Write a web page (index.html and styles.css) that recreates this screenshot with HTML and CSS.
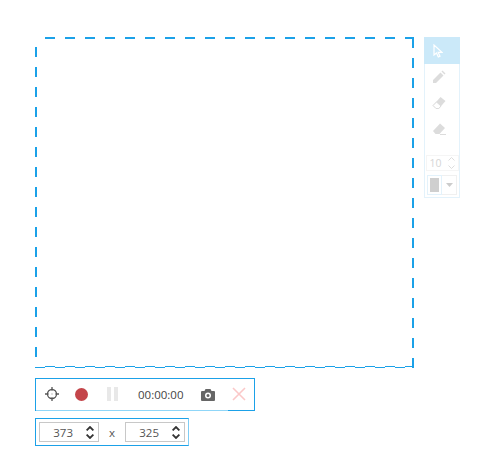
FILE: index.html
```html
<!DOCTYPE html>
<html lang="en">
<head>
<meta charset="utf-8">
<title>Recorder</title>
<link rel="stylesheet" href="styles.css">
</head>
<body>
<div class="stage">
  <div class="top-row">
    <svg class="frame" width="379" height="331" viewBox="0 0 379 331">
      <path class="frame-line" d="M10 1H379"/>
      <path class="frame-line" d="M1 10V330"/>
      <path class="frame-line" d="M378 331V0"/>
      <path class="frame-edge frame-edge-a" d="M379 329.500H0"/>
      <path class="frame-edge" d="M370 330.500H0"/>
    </svg>
    <div class="side">
      <div class="tool tool-active">
        <svg width="10" height="14" viewBox="0 0 10 14"><path d="M1 1v10l2.500-2 1.800 4 1.700-.8-1.800-3.800H9z" fill="#cbe9f9" stroke="#fff" stroke-width="1.200"/></svg>
      </div>
      <div class="tool">
        <svg width="14" height="14" viewBox="0 0 14 14"><path d="M1 10 8.500 2.500l3 3L4 13H1zM9.500 1.500l1-1 3 3-1 1z" fill="#dcdcdc"/></svg>
      </div>
      <div class="tool">
        <svg width="14" height="14" viewBox="0 0 14 14"><path d="M8.500 1 13.500 5 7 12.500H4L1 9.500z" fill="#dcdcdc"/><path d="M4.500 6l4.500 4-2.200 2.500H4L1 9.500z" fill="#fff" stroke="#dcdcdc"/></svg>
      </div>
      <div class="tool">
        <svg width="14" height="14" viewBox="0 0 14 14"><path d="M8 1.500 13 6l-5.500 6H3.500L1 9z" fill="#dcdcdc"/><path d="M8 12.500h6" stroke="#dcdcdc"/></svg>
      </div>
      <div class="side-spin">
        <span>10</span>
        <span class="side-arrows">
          <svg width="7" height="4" viewBox="0 0 7 4"><path d="M.5 3.500 3.500.5l3 3" fill="none" stroke="#ddd"/></svg>
          <svg width="7" height="4" viewBox="0 0 7 4"><path d="M.5.500l3 3 3-3" fill="none" stroke="#ddd"/></svg>
        </span>
      </div>
      <div class="color-row">
        <div class="swatch-box"><div class="swatch"></div></div>
        <div class="drop"><svg width="7" height="4" viewBox="0 0 7 4"><path d="M0 0h7L3.500 4z" fill="#ccc"/></svg></div>
      </div>
    </div>
  </div>
  <div class="controls">
    <svg class="ic-target" width="14" height="14" viewBox="0 0 14 14"><circle cx="7" cy="7" r="4.500" fill="none" stroke="#555" stroke-width="1.300"/><path d="M7 0v3.500M7 10.500V14M0 7h3.500M10.500 7H14" stroke="#555" stroke-width="1.300"/><path d="M6.500 6.500h1v1h-1z" fill="#888"/></svg>
    <span class="rec"></span>
    <span class="pause"><i></i><i></i></span>
    <span class="time">00:00:00</span>
    <svg class="ic-cam" width="14" height="12" viewBox="0 0 14 12"><path fill-rule="evenodd" d="M4.500 0h5l1 2H13a1 1 0 0 1 1 1v8a1 1 0 0 1-1 1H1a1 1 0 0 1-1-1V3a1 1 0 0 1 1-1h2.500zM7 3.500a3 3 0 1 0 0 6 3 3 0 0 0 0-6zM7 5a1.500 1.500 0 1 1 0 3 1.500 1.500 0 0 1 0-3z" fill="#666"/></svg>
    <svg class="ic-close" width="14" height="14" viewBox="0 0 14 14"><path d="M1 1l12 12M13 1 1 13" stroke="#fbc8c8" stroke-width="1.600"/></svg>
  </div>
  <div class="size">
    <div class="spin"><span class="spin-val">373</span><span class="arrows"><svg width="8" height="5" viewBox="0 0 8 5"><path d="M.6 4.400 4 1l3.400 3.400" fill="none" stroke="#333" stroke-width="1.800"/></svg><svg width="8" height="5" viewBox="0 0 8 5"><path d="M.6.600 4 4 7.400.6" fill="none" stroke="#333" stroke-width="1.800"/></svg></span></div>
    <span class="times">x</span>
    <div class="spin"><span class="spin-val">325</span><span class="arrows"><svg width="8" height="5" viewBox="0 0 8 5"><path d="M.6 4.400 4 1l3.400 3.400" fill="none" stroke="#333" stroke-width="1.800"/></svg><svg width="8" height="5" viewBox="0 0 8 5"><path d="M.6.600 4 4 7.400.6" fill="none" stroke="#333" stroke-width="1.800"/></svg></span></div>
  </div>
</div>
</body>
</html>
```
FILE: styles.css
```css
* { box-sizing: border-box; }
html, body { margin: 0; background: #fff; }
body { font-family: "Open Sans", "Liberation Sans", sans-serif; font-size: 11.5px; color: #555; }
.stage { padding: 37px 0 0 35px; display: flex; flex-direction: column; align-items: flex-start; }
.top-row { display: flex; align-items: flex-start; gap: 10px; }
.frame { display: block; }
.frame-line { fill: none; stroke: #1ba1e8; stroke-width: 2; stroke-dasharray: 10 10; }
.frame-edge { fill: none; stroke: #1ba1e8; stroke-width: 1; stroke-dasharray: 10 10; }
.frame-edge-a { stroke-dashoffset: 1; }
.side { width: 36px; height: 161px; border: 1px solid #e3f2fb; display: flex; flex-direction: column; align-items: center; }
.tool { width: 34px; height: 26px; display: flex; align-items: center; padding-left: 7px; flex: none; }
.tool-active { background: #cbe9f9; height: 27px; margin-top: -1px; width: 36px; padding-left: 9px; }
.side-spin { margin-top: 13px; width: 33px; height: 16px; border: 1px solid #f5f5f5; display: flex; align-items: center; justify-content: space-between; padding: 0 3px; color: #d5d5d5; font-size: 10.5px; }
.side-arrows { display: flex; flex-direction: column; gap: 4px; }
.side-arrows svg { display: block; }
.color-row { margin-top: 4px; width: 30px; height: 20px; display: flex; }
.swatch-box { width: 15px; height: 20px; border: 1px solid #e3f2fb; padding: 2px; }
.swatch { width: 100%; height: 100%; background: #cfcfcf; }
.drop { width: 15px; height: 20px; border: 1px solid #f0f0f0; border-left: 0; display: flex; align-items: center; justify-content: center; }
.controls { margin-top: 10px; width: 220px; height: 33px; border: 1px solid #1ba1e8; border-bottom: 0; background: linear-gradient(to right, #8fd6f8 88%, #1ba1e8 88%) bottom / 100% 1px no-repeat; display: flex; align-items: center; padding: 0 0 2px 9px; }
.ic-target { flex: none; }
.rec { flex: none; width: 13px; height: 13px; border-radius: 50%; background: #c4454a; margin-left: 16px; }
.pause { flex: none; display: flex; gap: 3px; margin-left: 19px; }
.pause i { display: block; width: 4px; height: 14px; background: #e8e8e8; }
.time { flex: none; margin-left: 20px; width: 46px; color: #444; white-space: nowrap; }
.ic-cam { flex: none; margin: 2px 0 0 17px; }
.ic-close { flex: none; margin-left: 17px; }
.size { margin-top: 7px; width: 154px; height: 28px; border: 1px solid #1ba1e8; border-right-color: #7fcdf5; display: flex; align-items: center; padding-left: 3px; }
.spin { width: 60px; height: 20px; border: 1px solid #c8c8c8; display: flex; align-items: center; justify-content: flex-end; padding-right: 4px; flex: none; }
.spin-val { color: #555; margin-right: 13px; }
.arrows { display: flex; flex-direction: column; gap: 3px; }
.arrows svg { display: block; }
.times { width: 26px; text-align: center; flex: none; }
```
